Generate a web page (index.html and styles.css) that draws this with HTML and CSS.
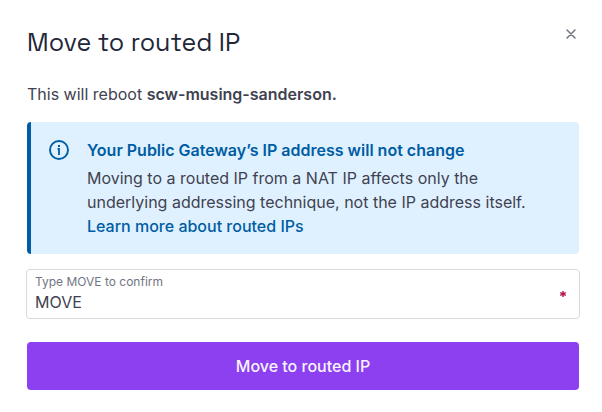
FILE: index.html
```html
<!DOCTYPE html>
<html lang="en">
<head>
<meta charset="utf-8">
<meta name="viewport" content="width=device-width, initial-scale=1">
<title>Move to routed IP</title>
<link rel="stylesheet" href="styles.css">
</head>
<body>
<main class="dialog" role="dialog" aria-labelledby="dialog-title">
  <header class="header">
    <h1 class="title" id="dialog-title">Move to routed IP</h1>
    <button class="close" type="button" aria-label="Close">
      <svg width="10" height="10" viewBox="0 0 10 10" fill="none" stroke="currentColor" stroke-width="1.5" stroke-linecap="round"><path d="M1 1l8 8M9 1L1 9"/></svg>
    </button>
  </header>
  <p class="intro">This will reboot <strong>scw-musing-sanderson.</strong></p>
  <section class="alert">
    <svg class="alert-icon" width="20" height="20" viewBox="0 0 20 20" fill="none"><circle cx="10" cy="10" r="9" stroke="currentColor" stroke-width="1.9"/><path d="M8.6 9h1.4v6" stroke="currentColor" stroke-width="1.8"/><rect x="9" y="5" width="2" height="2" fill="currentColor"/></svg>
    <div class="alert-body">
      <h2 class="alert-title">Your Public Gateway’s IP address will not change</h2>
      <p class="alert-text">Moving to a routed IP from a NAT IP affects only the underlying addressing technique, not the IP address itself.</p>
      <a class="link" href="#">Learn more about routed IPs</a>
    </div>
  </section>
  <form class="form">
    <div class="field">
      <div class="field-main">
        <label class="label" for="confirm">Type MOVE to confirm</label>
        <input class="input" id="confirm" type="text" value="MOVE" required>
      </div>
      <svg class="required" width="6" height="6" viewBox="0 0 6 6" stroke="currentColor" stroke-width="1.4" aria-hidden="true"><path d="M3 0v6M.2 1.5l5.6 3M5.8 1.5l-5.6 3"/></svg>
    </div>
    <button class="submit" type="button">Move to routed IP</button>
  </form>
</main>
</body>
</html>
```
FILE: styles.css
```css
* {
  box-sizing: border-box;
}

body {
  margin: 0;
  background: #fff;
  color: #3f4250;
  font: 16px/24px Inter, "Liberation Sans", sans-serif;
}

h1, h2, p {
  margin: 0;
}

.dialog {
  padding: 24px 22px 22px 27px;
}

.header {
  display: flex;
  align-items: flex-start;
  justify-content: space-between;
  margin-bottom: 22px;
}

.title {
  color: #222638;
  font-family: "Space Grotesk", Inter, "Liberation Sans", sans-serif;
  font-size: 25px;
  font-weight: 400;
  line-height: 36px;
}

.close {
  display: flex;
  padding: 5px 4px;
  border: 0;
  background: none;
  color: #727683;
}

.intro {
  margin-bottom: 16px;
}

strong {
  font-weight: 600;
}

.alert {
  display: flex;
  gap: 18px;
  margin-right: 1px;
  padding: 16px;
  padding-left: 18px;
  border-left: 4px solid #005da3;
  border-radius: 4px;
  background: #dff1ff;
}

.alert-icon {
  flex: none;
  margin-top: 2px;
  color: #005da3;
}

.alert-title {
  margin-bottom: 4px;
  color: #005da3;
  font-size: 16px;
  font-weight: 600;
  line-height: 24px;
}

.alert-text {
  max-width: 450px;
}

.link {
  color: #005da3;
  font-weight: 500;
  text-decoration: none;
}

.form {
  display: flex;
  flex-direction: column;
  gap: 23px;
  margin-top: 15px;
  margin-right: 1px;
}

.field {
  display: flex;
  align-items: center;
  margin: 0 -1px;
  padding: 4px 13px 4px 8px;
  border: 1px solid #d9dadd;
  border-radius: 4px;
}

.field-main {
  flex: 1;
}

.label {
  display: block;
  color: #727683;
  font-size: 12px;
  line-height: 16px;
}

.input {
  display: block;
  width: 100%;
  height: 24px;
  padding: 0;
  border: 0;
  outline: 0;
  background: none;
  color: inherit;
  font: inherit;
}

.required {
  color: #b3144d;
}

.submit {
  height: 48px;
  border: 0;
  border-radius: 4px;
  background: #8c40ef;
  color: #f9f4ff;
  font: inherit;
  font-weight: 500;
}
```
